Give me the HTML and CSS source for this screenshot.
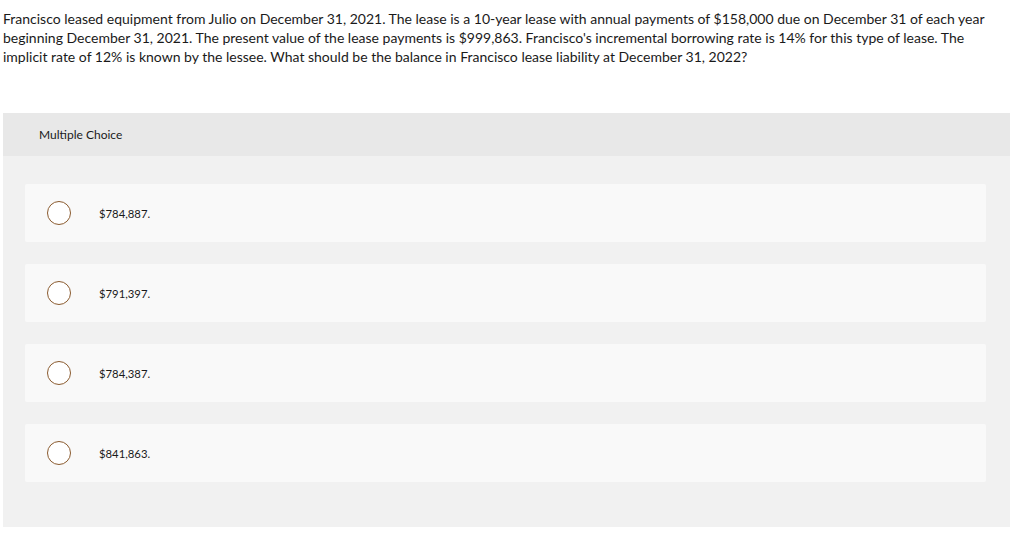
FILE: index.html
```html
<!DOCTYPE html>
<html>
<head>
<meta charset="utf-8">
<link rel="stylesheet" href="styles.css">
</head>
<body>
<div class="page">
  <p class="question">Francisco leased equipment from Julio on December 31, 2021. The lease is a 10-year lease with annual payments of $158,000 due on December 31 of each year beginning December 31, 2021. The present value of the lease payments is $999,863. Francisco's incremental borrowing rate is 14% for this type of lease. The implicit rate of 12% is known by the lessee. What should be the balance in Francisco lease liability at December 31, 2022?</p>
  <section class="panel">
    <header class="panel-head">Multiple Choice</header>
    <div class="panel-body">
      <label class="choice"><span class="radio"></span><span class="answer">$784,887.</span></label>
      <label class="choice"><span class="radio"></span><span class="answer">$791,397.</span></label>
      <label class="choice"><span class="radio"></span><span class="answer">$784,387.</span></label>
      <label class="choice"><span class="radio"></span><span class="answer">$841,863.</span></label>
    </div>
  </section>
</div>
</body>
</html>
```
FILE: styles.css
```css
html, body {
  margin: 0;
  padding: 0;
  background: #ffffff;
}
body {
  font-family: Lato, "Open Sans", sans-serif;
  color: #222222;
}
.page {
  width: 1024px;
  height: 538px;
  overflow: hidden;
}
.question {
  margin: 0;
  padding: 9px 30px 0 3px;
  font-size: 14px;
  line-height: 19px;
  color: #1a1a1a;
}
.panel {
  margin: 47px 14px 0 3px;
  background: #f1f1f1;
}
.panel-head {
  height: 43px;
  background: #e8e8e8;
  display: flex;
  align-items: center;
  padding-left: 36px;
  font-size: 12px;
  color: #1a1a1a;
}
.panel-body {
  display: flex;
  flex-direction: column;
  gap: 22px;
  padding: 28px 24px 45px 22px;
}
.choice {
  height: 58px;
  background: #f9f9f9;
  border-radius: 2px;
  display: flex;
  align-items: center;
  padding-left: 22px;
}
.radio {
  width: 22px;
  height: 22px;
  border: 1.3px solid #8a5a2e;
  border-radius: 50%;
  background: #ffffff;
  flex: none;
}
.answer {
  margin-left: 28px;
  font-size: 11.3px;
  color: #1a1a1a;
}
```
